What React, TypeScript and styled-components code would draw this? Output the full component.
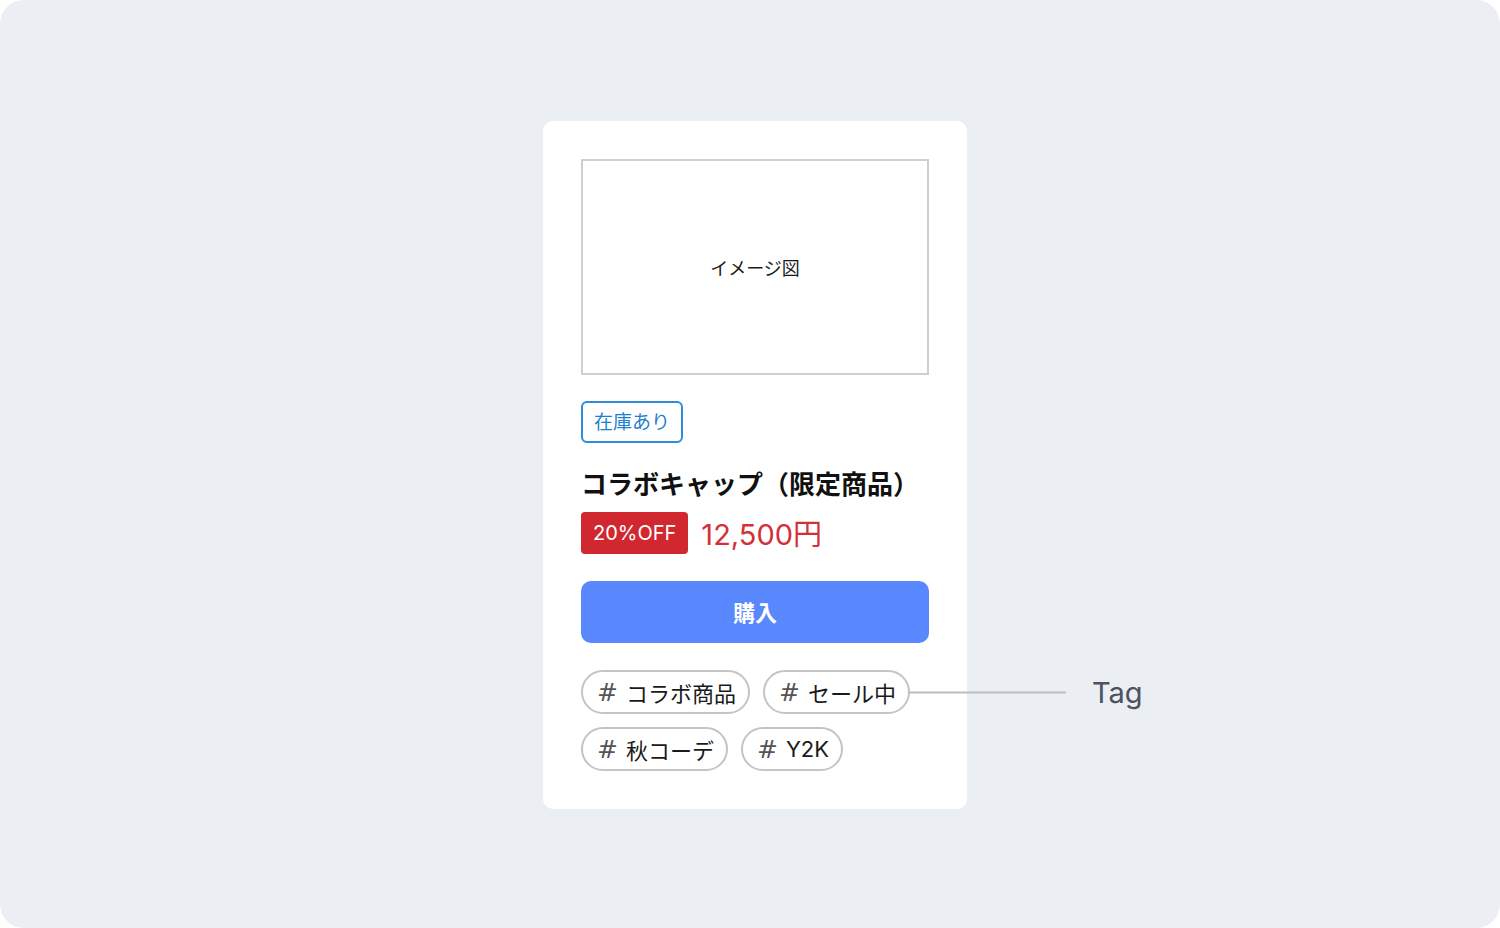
import React from "react";
import styled, { createGlobalStyle } from "styled-components";

const GlobalStyle = createGlobalStyle`
  html, body {
    margin: 0;
    padding: 0;
    background: #ffffff;
  }
  body {
    font-family: "Inter", "Noto Sans CJK JP", sans-serif;
  }
`;

const tags = ["コラボ商品", "セール中", "秋コーデ", "Y2K"];

export default function App() {
  return (
    <>
      <GlobalStyle />
      <Page>
        <Card>
          <ImageBox>イメージ図</ImageBox>
          <StockBadge>在庫あり</StockBadge>
          <Title>コラボキャップ（限定商品）</Title>
          <PriceRow>
            <OffBadge>20%OFF</OffBadge>
            <Price>12,500円</Price>
          </PriceRow>
          <BuyButton>購入</BuyButton>
          <TagList>
            {tags.map((t, i) => (
              <Tag key={t}>
                <Hash>#</Hash>
                {t}
                {i === 1 && (
                  <Callout>
                    <CalloutLine />
                    <CalloutLabel>Tag</CalloutLabel>
                  </Callout>
                )}
              </Tag>
            ))}
          </TagList>
        </Card>
      </Page>
    </>
  );
}

const Page = styled.div`
  width: 1500px;
  height: 928px;
  box-sizing: border-box;
  border-radius: 24px;
  background: #ebeef2;
  display: flex;
  justify-content: center;
  align-items: center;
  padding-left: 10px;
  padding-top: 2px;
`;

const Card = styled.div`
  width: 424px;
  box-sizing: border-box;
  padding: 38px;
  background: #ffffff;
  border-radius: 10px;
  display: flex;
  flex-direction: column;
  align-items: flex-start;
`;

const ImageBox = styled.div`
  width: 100%;
  height: 216px;
  box-sizing: border-box;
  border: 2px solid #cfcfcf;
  display: flex;
  align-items: center;
  justify-content: center;
  font-size: 18px;
  color: #1a1a1a;
`;

const StockBadge = styled.div`
  margin-top: 26px;
  height: 42px;
  box-sizing: border-box;
  padding: 0 11px 3px;
  border: 2px solid #2f8ad8;
  border-radius: 6px;
  color: #1f7fcf;
  font-size: 19px;
  display: flex;
  align-items: center;
`;

const Title = styled.h1`
  margin: 23px 0 7px;
  font-size: 26px;
  line-height: 38px;
  font-weight: 700;
  color: #111111;
`;

const PriceRow = styled.div`
  display: flex;
  align-items: center;
  gap: 13px;
`;

const OffBadge = styled.div`
  height: 42px;
  box-sizing: border-box;
  padding: 0 12px;
  background: #d1282f;
  border-radius: 4px;
  color: #ffffff;
  font-size: 20px;
  display: flex;
  align-items: center;
`;

const Price = styled.div`
  font-size: 29px;
  color: #d3303a;
  padding-bottom: 2px;
`;

const BuyButton = styled.button`
  margin-top: 26px;
  width: 100%;
  height: 62px;
  border: none;
  border-radius: 10px;
  background: #5887fe;
  color: #ffffff;
  font-family: inherit;
  font-size: 22px;
  font-weight: 700;
  padding: 0 0 3px;
`;

const TagList = styled.div`
  margin-top: 27px;
  display: flex;
  flex-wrap: wrap;
  gap: 13px;
`;

const Tag = styled.div`
  position: relative;
  height: 44px;
  box-sizing: border-box;
  padding: 0 12px 0 14px;
  border: 2px solid #c4c4c4;
  border-radius: 22px;
  display: flex;
  align-items: center;
  gap: 8px;
  font-size: 22px;
  color: #1a1a1a;
`;

const Hash = styled.span`
  font-family: "DejaVu Sans", sans-serif;
  font-size: 25px;
  color: #555555;
`;

const Callout = styled.div`
  position: absolute;
  left: 100%;
  top: 50%;
  transform: translateY(-50%);
  display: flex;
  align-items: center;
  gap: 26px;
`;

const CalloutLine = styled.div`
  width: 158px;
  height: 2px;
  background: #bdbdbd;
`;

const CalloutLabel = styled.span`
  font-family: "Inter", "Noto Sans", sans-serif;
  font-size: 29px;
  color: #4b5260;
  white-space: nowrap;
`;
